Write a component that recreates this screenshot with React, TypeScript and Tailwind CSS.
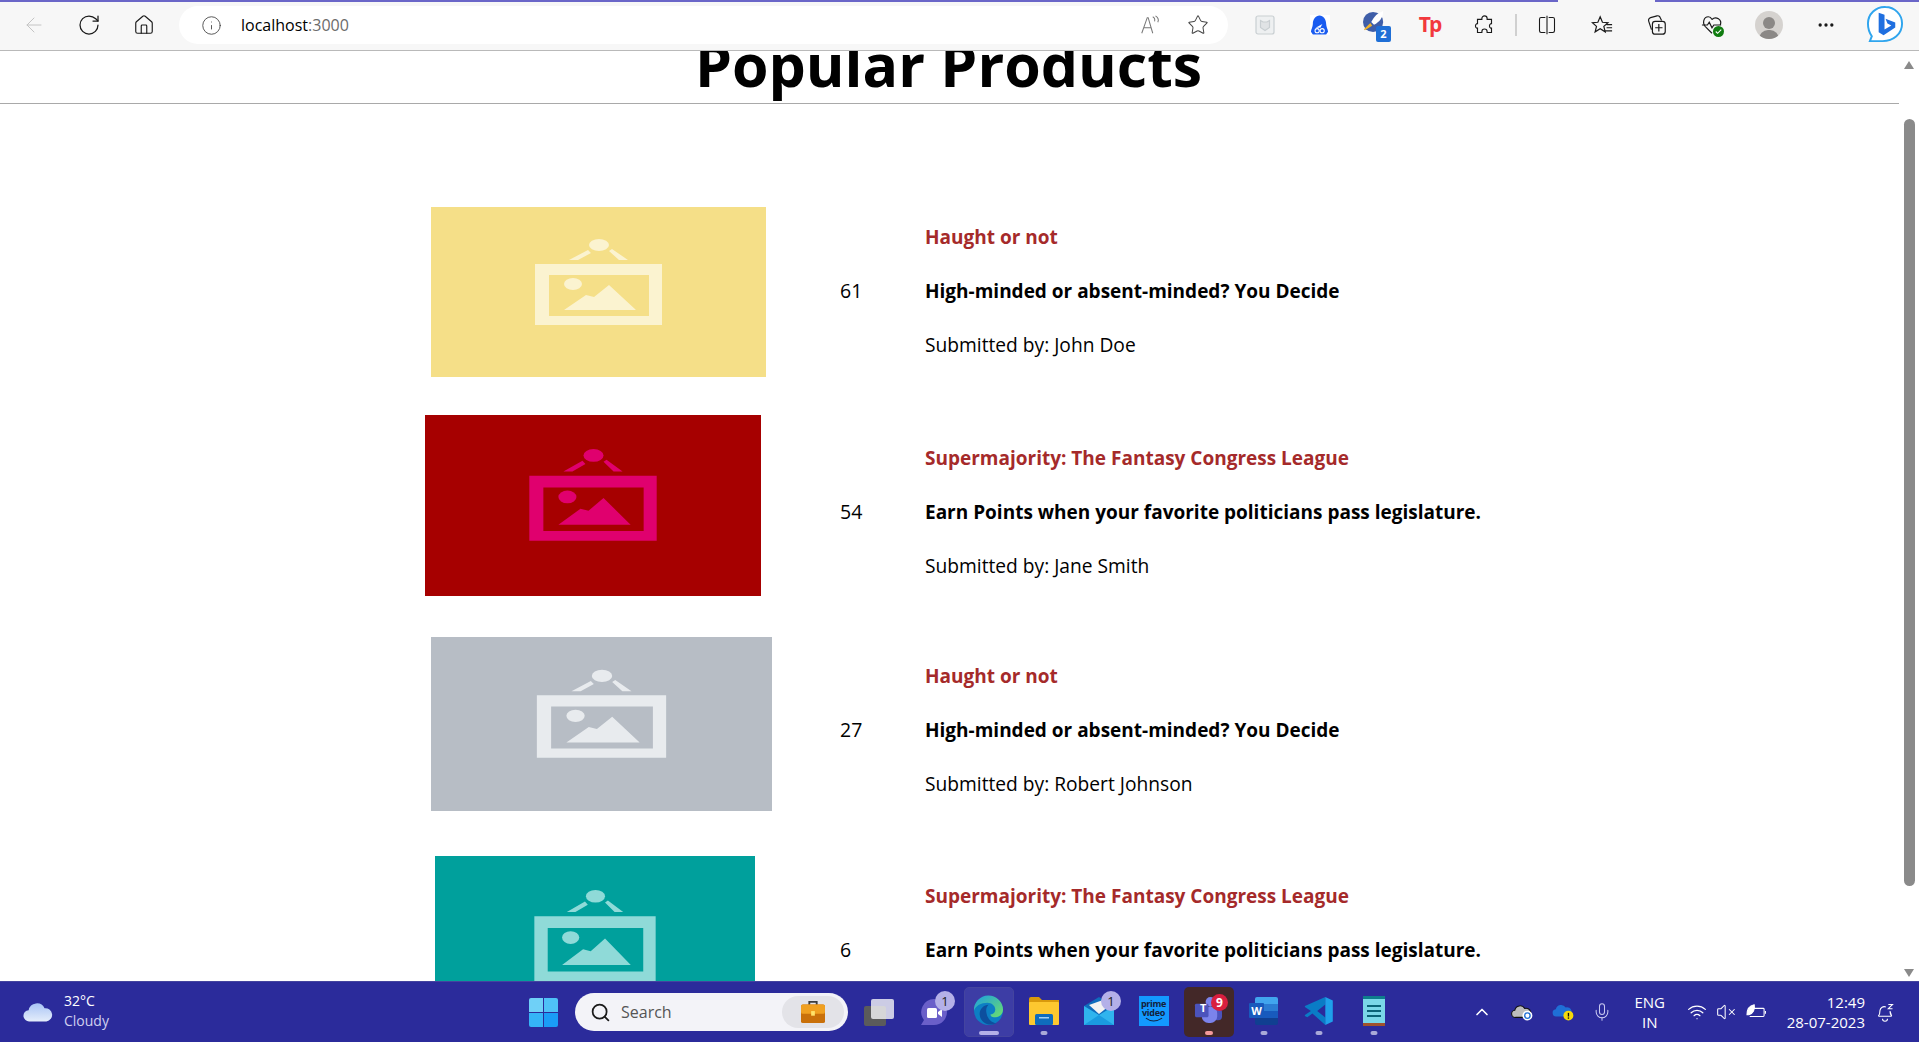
import {
  ArrowLeft,
  ChevronUp,
  Ellipsis,
  House,
  Info,
  Mic,
  RotateCw,
  Search,
  Star,
  VolumeX,
  Wifi,
} from "lucide-react";

const products = [
  {
    id: 1,
    title: "Haught or not",
    desc: "High-minded or absent-minded? You Decide",
    by: "John Doe",
    votes: 61,
    rowClass: "h-[221px]",
    imgClass: "ml-[431px] mt-[25px] w-[335px] h-[170px] bg-[#f5df88] text-[#fbf3d0]",
    spacerClass: "w-[74px]",
  },
  {
    id: 2,
    title: "Supermajority: The Fantasy Congress League",
    desc: "Earn Points when your favorite politicians pass legislature.",
    by: "Jane Smith",
    votes: 54,
    rowClass: "h-[218px]",
    imgClass: "ml-[425px] mt-[12px] w-[336px] h-[181px] bg-[#a60000] text-[#e0006e]",
    spacerClass: "w-[79px]",
  },
  {
    id: 3,
    title: "Haught or not",
    desc: "High-minded or absent-minded? You Decide",
    by: "Robert Johnson",
    votes: 27,
    rowClass: "h-[220px]",
    imgClass: "ml-[431px] mt-[16px] w-[341px] h-[174px] bg-[#b7bdc5] text-[#e8ebee]",
    spacerClass: "w-[68px]",
  },
  {
    id: 4,
    title: "Supermajority: The Fantasy Congress League",
    desc: "Earn Points when your favorite politicians pass legislature.",
    by: "Jane Smith",
    votes: 6,
    rowClass: "h-[219px]",
    imgClass: "ml-[435px] mt-[15px] w-[320px] h-[180px] bg-[#00a09c] text-[#8fdad8]",
    spacerClass: "w-[85px]",
  },
];

// blurry placeholder picture that sits inside every product image
const PlaceholderArt = () => (
  <svg viewBox="0 0 335 170" preserveAspectRatio="none" className="w-full h-full blur-[0.6px]" fill="currentColor">
    <ellipse cx="168" cy="38" rx="10" ry="6" />
    <path d="M138 53l19-10 3 3-13 7zM178 44l3-2 16 11h-9z" />
    <path fillRule="evenodd" d="M104 57h127v61H104zM118 68v41h100V68z" />
    <ellipse cx="142" cy="77" rx="9" ry="6" />
    <path d="M133 103l22-15 8 2 15-12 27 25z" />
  </svg>
);

const ProductRow = ({ item }: { item: (typeof products)[number] }) => (
  <div className={`flex ${item.rowClass}`}>
    <div className={`shrink-0 ${item.imgClass}`}>
      <PlaceholderArt />
    </div>
    <div className={`shrink-0 ${item.spacerClass}`} />
    <div className="w-[85px] shrink-0 flex items-center h-[162px] mt-[28px] text-[19.5px] leading-[54px]">{item.votes}</div>
    <div className="mt-[28px]">
      <p className="font-bold text-[19px] text-[#a52a2a] h-[54px] leading-[54px]">{item.title}</p>
      <p className="font-bold text-[19px] h-[54px] leading-[54px]">{item.desc}</p>
      <p className="text-[19.2px] h-[54px] leading-[54px]">Submitted by: {item.by}</p>
    </div>
  </div>
);

const ToolIcon = ({ children, className = "" }: { children: React.ReactNode; className?: string }) => (
  <div className={`w-[55px] h-[50px] shrink-0 flex items-center justify-center ${className}`}>{children}</div>
);

const Toolbar = () => (
  <div className="h-[51px] shrink-0 relative bg-[#f7f7f7] border-b border-[#b9b9b9] flex items-center text-[#1a1a1a]">
    <div className="absolute top-0 left-0 w-[1558px] h-[2px] bg-[#6a66c8]" />
    <div className="absolute top-0 left-[1655px] w-[264px] h-[2px] bg-[#6a66c8]" />
    <div className="w-[6px] shrink-0" />
    <ToolIcon>
      <ArrowLeft size={24} strokeWidth={1} className="text-[#c4c4c4]" />
    </ToolIcon>
    <ToolIcon>
      <RotateCw size={24} strokeWidth={1.25} />
    </ToolIcon>
    <ToolIcon>
      <House size={22} strokeWidth={1.25} />
    </ToolIcon>
    <div className="w-[8px] shrink-0" />
    <div className="w-[1049px] h-[38px] shrink-0 bg-white rounded-full flex items-center">
      <Info size={21} strokeWidth={1} className="ml-[22px] text-[#444]" />
      <span className="ml-[19px] text-[16px] text-black">
        localhost<span className="text-[#6b6b6b]">:3000</span>
      </span>
      <svg viewBox="0 0 24 24" className="ml-auto mr-[26px] w-[22px] h-[22px]" fill="none" stroke="#777" strokeWidth="1.1">
        <path d="M3 21l6-17h1l5 17M5.500 15h7.500" />
        <path d="M15 3c2 1 2.500 3 2 5M18 2c3 2 3.500 5 2.500 7" />
      </svg>
      <Star size={22} strokeWidth={1.1} className="mr-[19px] text-[#444]" />
    </div>
    <div className="w-[9px] shrink-0" />
    <ToolIcon>
      <svg viewBox="0 0 20 20" className="w-[20px] h-[20px]" fill="#eef0f1" stroke="#c9cfd2" strokeWidth="1.200">
        <rect x="1" y="1" width="18" height="18" rx="2" />
        <path d="M5.500 5.500l2.500 1.500h4l2.500-1.500v7l-4.500 3-4.500-3z" fill="#e0e3e5" />
      </svg>
    </ToolIcon>
    <ToolIcon>
      <div className="w-[20px] h-[20px] bg-white flex items-center justify-center">
        <svg viewBox="0 0 20 20" className="w-[19px] h-[20px]">
          <path d="M10 0c4 0 7 4 7 9 0 3 2 6 2 8l-2 3H3l-2-3c0-2 2-5 2-8 0-5 3-9 7-9z" fill="#1a5cf0" />
          <path d="M6 13l7-4-2 4z" fill="#fff" />
          <circle cx="7.500" cy="16" r="2.200" fill="none" stroke="#fff" strokeWidth="1.100" />
          <circle cx="12.800" cy="16" r="2.200" fill="none" stroke="#fff" strokeWidth="1.100" />
        </svg>
      </div>
    </ToolIcon>
    <ToolIcon className="relative">
      <svg viewBox="0 0 24 24" className="w-[22px] h-[22px] -mt-[6px] -ml-[1px]">
        <circle cx="11" cy="12" r="11" fill="#3f5ea8" />
        <path d="M22 0c0 7-4 12-10 15l-3-3C12 6 16 2 22 0z" fill="#fff" />
        <path d="M8 13l-7 7 1 1 8-5z" fill="#f1b32c" />
      </svg>
      <span className="absolute left-[29px] top-[26px] w-[15px] h-[16px] bg-[#1f6fd6] rounded-[2px] text-white text-[11px] font-bold leading-[16px] text-center">
        2
      </span>
    </ToolIcon>
    <ToolIcon>
      <span className="text-[#f2393d] font-bold text-[21px] tracking-[-2px] leading-none -mt-[2px]">Tp</span>
    </ToolIcon>
    <ToolIcon>
      <svg viewBox="0 0 24 24" className="w-[21px] h-[21px]" fill="none" stroke="#1a1a1a" strokeWidth="1.300">
        <path d="M9 4a3 3 0 0 1 6 0v1h5v5h-1a3 3 0 0 0 0 5h1v5h-5v-1a3 3 0 0 0-6 0v1H4v-5H3a3 3 0 0 1 0-5h1V5h5z" />
      </svg>
    </ToolIcon>
    <div className="w-[2px] h-[22px] bg-[#d0d0d0] shrink-0 ml-[3px]" />
    <ToolIcon className="ml-[2px]">
      <svg viewBox="0 0 24 24" className="w-[20px] h-[20px]" fill="none" stroke="#1a1a1a" strokeWidth="1.300">
        <path d="M10 3H5a2 2 0 0 0-2 2v14a2 2 0 0 0 2 2h5M14 3h5a2 2 0 0 1 2 2v14a2 2 0 0 1-2 2h-5M12 1v22" />
      </svg>
    </ToolIcon>
    <ToolIcon>
      <svg viewBox="0 0 24 24" className="w-[22px] h-[22px]" fill="none" stroke="#1a1a1a" strokeWidth="1.300">
        <path d="M10 3l2.500 6 6 .5-4.500 4 1.500 6-5.500-3.500L4.500 19.500 6 13.500 1.500 9.500l6-.5zM17 11.500h6M17 15h6M15 18.500h8" />
      </svg>
    </ToolIcon>
    <ToolIcon>
      <svg viewBox="0 0 24 24" className="w-[22px] h-[22px]" fill="none" stroke="#1a1a1a" strokeWidth="1.300">
        <path d="M6 17l-3-9a3 3 0 0 1 2-4l7-2a3 3 0 0 1 3 1l2 4" />
        <rect x="7" y="8" width="14" height="14" rx="3" />
        <path d="M14 11v8M10 15h8" />
      </svg>
    </ToolIcon>
    <ToolIcon className="relative">
      <svg viewBox="0 0 24 24" className="w-[22px] h-[22px]" fill="none" stroke="#1a1a1a" strokeWidth="1.300">
        <path d="M12 21l-7-7M12 6a5.500 5.500 0 0 1 9 6" />
        <path d="M5 14C1 10 3 3 8 3c2 0 3 1 4 3" />
        <path d="M1 12h6l2-3 3 6 2-3h8" />
      </svg>
      <svg viewBox="0 0 12 12" className="absolute left-[29px] top-[26px] w-[11px] h-[11px]">
        <circle cx="6" cy="6" r="6" fill="#107c10" />
        <path d="M3 6l2 2 4-4" fill="none" stroke="#fff" strokeWidth="1.200" />
      </svg>
    </ToolIcon>
    <ToolIcon className="ml-[2px]">
      <div className="w-[28px] h-[28px] rounded-full bg-[#d5d2cf] flex flex-col items-center justify-end overflow-hidden">
        <div className="w-[12px] h-[12px] rounded-full bg-[#8b8886] mb-[1px]" />
        <div className="w-[20px] h-[9px] rounded-t-full bg-[#8b8886]" />
      </div>
    </ToolIcon>
    <ToolIcon className="ml-[2px]">
      <Ellipsis size={20} strokeWidth={2} />
    </ToolIcon>
    <ToolIcon className="ml-[5px]">
      <svg viewBox="0 0 40 42" className="w-[39px] h-[41px]">
        <path d="M20 2a17 17 0 0 1 17 17c0 11-9 18-20 18H4l2-5C3 28 2 24 2 19A17 17 0 0 1 20 2z" fill="#fff" stroke="#2fa5ee" strokeWidth="2" />
        <path d="M13 8l6 2v15l7-4-4-2-2-5 10 4v5l-12 8-5-3z" fill="#1f6fe0" />
      </svg>
    </ToolIcon>
  </div>
);

const Scrollbar = () => (
  <div className="w-[20px] shrink-0 flex flex-col items-center bg-white">
    <div className="h-[18px] w-full flex items-end justify-center">
      <div className="w-0 h-0 border-x-[5px] border-x-transparent border-b-[8px] border-b-[#8a8a8a]" />
    </div>
    <div className="mt-[50px] w-[11px] h-[767px] rounded-full bg-[#8a8a8a]" />
    <div className="mt-auto mb-[4px] w-0 h-0 border-x-[5px] border-x-transparent border-t-[8px] border-t-[#8a8a8a]" />
  </div>
);

const Page = () => (
  <div className="flex-1 min-h-0 flex overflow-hidden bg-white text-black">
    <div className="flex-1 min-w-0">
      <div className="h-[53px] border-b border-[#a9a9a9] flex items-end justify-center overflow-hidden">
        <h1 className="font-bold text-[59px] leading-[84px] -mb-[3px] ml-[-2px]">Popular Products</h1>
      </div>
      <div className="pt-[78px]">
        {products.map((item) => (
          <ProductRow key={item.id} item={item} />
        ))}
      </div>
    </div>
    <Scrollbar />
  </div>
);

const Badge = ({ n, className }: { n: number; className: string }) => (
  <span className={`absolute w-[20px] h-[20px] rounded-full text-[13px] leading-[20px] text-center ${className}`}>{n}</span>
);

const Dot = ({ className = "bg-[#a9a9d8] w-[7px]" }: { className?: string }) => (
  <span className={`absolute bottom-[2px] left-1/2 -translate-x-1/2 h-[4px] rounded-full ${className}`} />
);

const Taskbar = () => (
  <div className="h-[61px] shrink-0 bg-[#2b2b9b] border-t border-[#44449f] flex items-center text-white">
    <div className="w-[529px] shrink-0 flex items-center pl-[23px]">
      <svg viewBox="0 0 32 22" className="w-[30px] h-[22px]">
        <defs>
          <linearGradient id="cloudFill" x1="0" y1="0" x2="0" y2="1">
            <stop offset="0" stopColor="#a9c4f5" />
            <stop offset="1" stopColor="#e4edfb" />
          </linearGradient>
        </defs>
        <path d="M7 21a6 6 0 0 1-1-12 9 9 0 0 1 17-2 7 7 0 0 1 2 14z" fill="url(#cloudFill)" />
      </svg>
      <div className="ml-[11px] -mt-[3px] text-[14px] leading-[20px]">
        <div>32°C</div>
        <div className="text-[#d0d0ee]">Cloudy</div>
      </div>
    </div>
    <div className="w-[46px] shrink-0">
      <div className="w-[29px] h-[29px] grid grid-cols-2 gap-[1px]">
        <div className="bg-[#6fd0f7] rounded-tl-[2px]" />
        <div className="bg-[#4fc1f7] rounded-tr-[2px]" />
        <div className="bg-[#35b4f7] rounded-bl-[2px]" />
        <div className="bg-[#1a9cf7] rounded-br-[2px]" />
      </div>
    </div>
    <div className="w-[273px] h-[38px] shrink-0 rounded-full bg-[#f3f3f8] flex items-center text-[#555]">
      <Search size={21} strokeWidth={2} className="ml-[15px] text-[#1a1a1a]" />
      <span className="ml-[10px] text-[16px]">Search</span>
      <div className="ml-auto mr-[4px] w-[62px] h-[32px] rounded-full bg-[#e3e3e8] flex items-center justify-center">
        <svg viewBox="0 0 28 26" className="w-[28px] h-[24px]">
          <path d="M10 6V2h8v4" fill="none" stroke="#3d3d3d" strokeWidth="2" />
          <rect x="1" y="5" width="26" height="20" rx="2" fill="#c9700a" />
          <rect x="1" y="5" width="26" height="10" rx="2" fill="#f0a020" />
          <rect x="12" y="12" width="4" height="5" fill="#ffe36a" />
        </svg>
      </div>
    </div>
    <div className="w-[3px] shrink-0" />
    {/* task view */}
    <div className="w-[55px] h-[50px] shrink-0 flex items-center justify-center">
      <div className="relative w-[30px] h-[27px]">
        <div className="absolute left-0 bottom-0 w-[22px] h-[20px] bg-[#5b5b5b] rounded-[2px]" />
        <div className="absolute right-0 top-0 w-[23px] h-[20px] bg-[#f5f5f8]/80 rounded-[2px]" />
      </div>
    </div>
    {/* chat */}
    <div className="relative w-[55px] h-[50px] shrink-0 flex items-center justify-center">
      <svg viewBox="0 0 28 28" className="w-[28px] h-[28px]">
        <path d="M14 1a13 13 0 0 1 0 26H1l3-5A13 13 0 0 1 14 1z" fill="#6a5fc9" />
        <rect x="7" y="10" width="10" height="10" rx="1.500" fill="#fff" />
        <path d="M18 14l4-3v8l-4-3z" fill="#fff" />
      </svg>
      <Badge n={1} className="left-[29px] top-[4px] bg-[#b4b0e8] text-[#222]" />
    </div>
    {/* edge */}
    <div className="relative w-[55px] h-[50px] shrink-0 flex items-center justify-center">
      <div className="absolute left-[3px] top-0 w-[50px] h-[50px] rounded-[5px] bg-[#3d3da5] border border-[#44449f]" />
      <svg viewBox="0 0 32 32" className="relative w-[31px] h-[31px] -mt-[3px]">
        <defs>
          <linearGradient id="edgeTop" x1="0" y1="0" x2="1" y2="1">
            <stop offset="0" stopColor="#1b9de2" />
            <stop offset="1" stopColor="#6ee06a" />
          </linearGradient>
        </defs>
        <circle cx="16" cy="16" r="15" fill="#0c7fc4" />
        <path d="M1 16A15 15 0 0 1 31 15c0 5-4 8-8 8-3 0-5-1-5-3 3 0 5-2 5-5 0-4-4-7-8-7C8 8 3 11 1 16z" fill="url(#edgeTop)" />
        <path d="M24 29c-7 4-16 0-17-8-1-6 4-11 9-11-2 2-3 5-2 9 1 6 6 10 10 10z" fill="#0d4f9e" />
      </svg>
      <Dot className="bg-[#b4b0e8] w-[20px]" />
    </div>
    {/* explorer */}
    <div className="relative w-[55px] h-[50px] shrink-0 flex items-center justify-center">
      <svg viewBox="0 0 30 28" className="w-[30px] h-[28px] -mt-[3px]">
        <path d="M0 2a2 2 0 0 1 2-2h8l3 3h17v3H0z" fill="#d99a0c" />
        <rect x="0" y="5" width="30" height="23" rx="1" fill="#fdc830" />
        <rect x="6" y="17" width="18" height="11" rx="1.500" fill="#0f6cbd" />
        <rect x="10" y="20" width="10" height="1.500" fill="#9fd0f5" />
      </svg>
      <Dot />
    </div>
    {/* mail */}
    <div className="relative w-[55px] h-[50px] shrink-0 flex items-center justify-center">
      <svg viewBox="0 0 30 28" className="w-[30px] h-[28px] -mt-[3px]">
        <path d="M15 0L30 9v19H0V9z" fill="#0f6cbd" />
        <path d="M5 8l14-5 6 6-10 8z" fill="#f2f2f2" />
        <path d="M0 9l15 9 15-9v19H0z" fill="#30b4ee" />
        <path d="M0 28l15-10 15 10z" fill="#1a9ae0" />
      </svg>
      <Badge n={1} className="left-[30px] top-[4px] bg-[#b4b0e8] text-[#222]" />
    </div>
    {/* prime video */}
    <div className="w-[55px] h-[50px] shrink-0 flex items-center justify-center">
      <div className="w-[30px] h-[30px] -mt-[3px] bg-[#1399ff] text-[#14213a] text-[9px] font-bold leading-[9px] text-center pt-[3px] tracking-[-0.3px] flex flex-col items-center">
        <span>prime</span>
        <span>video</span>
        <svg viewBox="0 0 20 5" className="w-[18px] h-[5px]">
          <path d="M1 1c5 4 12 4 18 0" fill="none" stroke="#14213a" strokeWidth="1.200" />
        </svg>
      </div>
    </div>
    {/* teams */}
    <div className="relative w-[55px] h-[50px] shrink-0 flex items-center justify-center">
      <div className="absolute left-[3px] top-0 w-[50px] h-[50px] rounded-[5px] bg-[#432828]" />
      <svg viewBox="0 0 30 30" className="relative w-[29px] h-[29px] -mt-[3px]">
        <circle cx="17" cy="6" r="5" fill="#7b83eb" />
        <circle cx="25" cy="10" r="3.500" fill="#5b5fc7" />
        <rect x="20" y="13" width="9" height="12" rx="4" fill="#4b53bc" />
        <rect x="8" y="11" width="16" height="17" rx="7" fill="#7b83eb" />
        <rect x="1" y="8" width="14" height="14" rx="1.500" fill="#4b53bc" />
      </svg>
      <span className="absolute left-[19px] top-[13px] text-[11px] font-bold">T</span>
      <span className="absolute left-[30px] top-[7px] w-[17px] h-[17px] rounded-full bg-[#d91f3f] text-[12px] leading-[17px] text-center font-bold">
        9
      </span>
      <Dot className="bg-[#f59a9a] w-[8px]" />
    </div>
    {/* word */}
    <div className="relative w-[55px] h-[50px] shrink-0 flex items-center justify-center">
      <div className="relative w-[29px] h-[28px] -mt-[3px]">
        <div className="absolute right-0 top-0 w-[23px] h-[7px] rounded-t-[2px] bg-[#41a5ee]" />
        <div className="absolute right-0 top-[7px] w-[23px] h-[7px] bg-[#2b7cd3]" />
        <div className="absolute right-0 top-[14px] w-[23px] h-[7px] bg-[#185abd]" />
        <div className="absolute right-0 bottom-0 w-[23px] h-[7px] bg-[#103f91] rounded-b-[2px]" />
        <div className="absolute left-0 top-[6px] w-[15px] h-[15px] bg-[#185abd] rounded-[1px] text-white text-[11px] font-bold leading-[15px] text-center">
          W
        </div>
      </div>
      <Dot />
    </div>
    {/* vs code */}
    <div className="relative w-[55px] h-[50px] shrink-0 flex items-center justify-center">
      <svg viewBox="0 0 100 100" className="w-[30px] h-[30px] -mt-[3px]">
        <path fillRule="evenodd" d="M71 3L3 33v4l20 13L3 63v4l8 4 17-13 43 39V72L44 50l27-22z" fill="#0a7cc6" />
        <path d="M71 3l25 12v70L71 97z" fill="#1fa0ea" />
      </svg>
      <Dot />
    </div>
    {/* notepad */}
    <div className="relative w-[55px] h-[50px] shrink-0 flex items-center justify-center">
      <div className="w-[22px] h-[30px] -mt-[3px] bg-[#7ad7e8] border-b-[3px] border-[#a0522d] border-t-[3px] border-t-[#0e7d8c] flex flex-col items-center justify-center gap-[3px]">
        <div className="w-[14px] h-[2px] bg-[#0a6478]" />
        <div className="w-[14px] h-[2px] bg-[#0a6478]" />
        <div className="w-[14px] h-[2px] bg-[#0a6478]" />
      </div>
      <Dot />
    </div>
    {/* tray */}
    <div className="ml-auto flex items-center h-full">
      <ChevronUp size={20} strokeWidth={2} className="mr-[19px]" />
      <svg viewBox="0 0 24 20" className="w-[22px] h-[18px] mr-[19px]">
        <path d="M5 16a4 4 0 0 1-1-8 6 6 0 0 1 11-2 5 5 0 0 1 3 10z" fill="#bdbdbd" stroke="#111" strokeWidth="1.200" />
        <circle cx="18" cy="14" r="5.500" fill="#fff" />
        <circle cx="18" cy="14" r="3" fill="none" stroke="#1f6fd6" strokeWidth="1.500" />
      </svg>
      <svg viewBox="0 0 24 20" className="w-[22px] h-[18px] mr-[18px]">
        <path d="M5 15a4 4 0 0 1-1-8 6 6 0 0 1 11-2 5 5 0 0 1 3 10z" fill="#1f6fd6" />
        <circle cx="18" cy="14" r="5.500" fill="#f5d90a" />
        <rect x="17.300" y="11" width="1.500" height="4" fill="#111" />
        <rect x="17.300" y="16" width="1.500" height="1.500" fill="#111" />
      </svg>
      <Mic size={20} strokeWidth={1.25} className="text-[#c9c9f0] mr-[16px]" />
      <div className="w-[44px] text-center text-[15px] leading-[20px] mr-[15px]">
        <div>ENG</div>
        <div>IN</div>
      </div>
      <Wifi size={20} strokeWidth={1.5} className="mr-[9px]" />
      <VolumeX size={20} strokeWidth={1.25} className="mr-[9px]" />
      <svg viewBox="0 0 24 20" className="w-[22px] h-[18px] mr-[20px]" fill="none" stroke="#fff" strokeWidth="1.200">
        <path d="M9 6h11a1 1 0 0 1 1 1v7a1 1 0 0 1-1 1H5" />
        <path d="M22.500 9v3" />
        <path d="M2 13c0-6 3-10 8-11 1 5-1 10-6 11z" fill="#fff" />
      </svg>
      <div className="text-right text-[15px] leading-[20px] mr-[10px]">
        <div>12:49</div>
        <div>28-07-2023</div>
      </div>
      <svg viewBox="0 0 24 24" className="w-[20px] h-[20px] mr-[24px]" fill="none" stroke="#fff" strokeWidth="1.300">
        <path d="M4 17c2-2 2-4 2-7a5 5 0 0 1 7-4M18 11c0 3 0 4 2 6zM4 17h16M9 20a3 3 0 0 0 6 0" />
        <path d="M16 3h5l-5 5h5" />
      </svg>
    </div>
  </div>
);

const App = () => {
  return (
    <div className="w-[1919px] h-[1042px] flex flex-col overflow-hidden font-['Open_Sans',sans-serif]">
      <Toolbar />
      <Page />
      <Taskbar />
    </div>
  );
};

export default App;
